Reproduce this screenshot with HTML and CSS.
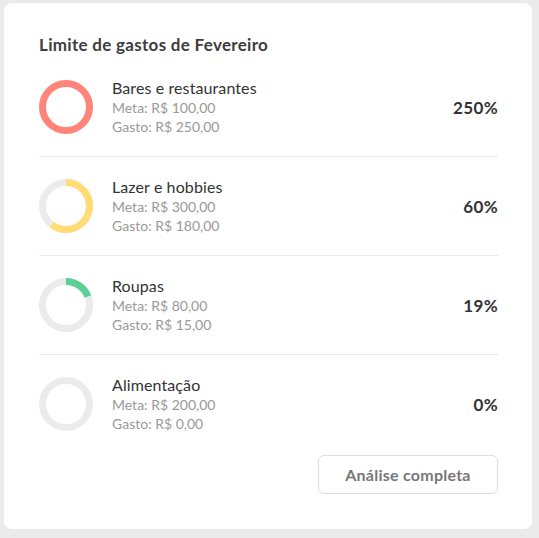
FILE: index.html
```html
<!DOCTYPE html>
<html lang="pt-BR">
<head>
<meta charset="utf-8">
<link rel="stylesheet" href="styles.css">
</head>
<body>
<div class="card">
  <h2 class="title">Limite de gastos de Fevereiro</h2>
  <ul class="list">
    <li class="row">
      <svg class="ring" width="54" height="54" viewBox="0 0 54 54">
        <circle class="track" cx="27" cy="27" r="23.5"/>
        <circle class="bar red" cx="27" cy="27" r="23.5" style="stroke-dasharray: 147.65 147.65"/>
      </svg>
      <div class="info">
        <div class="name">Bares e restaurantes</div>
        <div class="meta">Meta: R$ 100,00</div>
        <div class="meta">Gasto: R$ 250,00</div>
      </div>
      <div class="pct">250%</div>
    </li>
    <li class="row">
      <svg class="ring" width="54" height="54" viewBox="0 0 54 54">
        <circle class="track" cx="27" cy="27" r="23.5"/>
        <circle class="bar yellow" cx="27" cy="27" r="23.5" style="stroke-dasharray: 88.59 147.65"/>
      </svg>
      <div class="info">
        <div class="name">Lazer e hobbies</div>
        <div class="meta">Meta: R$ 300,00</div>
        <div class="meta">Gasto: R$ 180,00</div>
      </div>
      <div class="pct">60%</div>
    </li>
    <li class="row">
      <svg class="ring" width="54" height="54" viewBox="0 0 54 54">
        <circle class="track" cx="27" cy="27" r="23.5"/>
        <circle class="bar green" cx="27" cy="27" r="23.5" style="stroke-dasharray: 28.05 147.65"/>
      </svg>
      <div class="info">
        <div class="name">Roupas</div>
        <div class="meta">Meta: R$ 80,00</div>
        <div class="meta">Gasto: R$ 15,00</div>
      </div>
      <div class="pct">19%</div>
    </li>
    <li class="row">
      <svg class="ring" width="54" height="54" viewBox="0 0 54 54">
        <circle class="track" cx="27" cy="27" r="23.5"/>
      </svg>
      <div class="info">
        <div class="name">Alimentação</div>
        <div class="meta">Meta: R$ 200,00</div>
        <div class="meta">Gasto: R$ 0,00</div>
      </div>
      <div class="pct">0%</div>
    </li>
  </ul>
  <div class="actions">
    <button class="btn">Análise completa</button>
  </div>
</div>
</body>
</html>
```
FILE: styles.css
```css
* { box-sizing: border-box; }
html, body { margin: 0; padding: 0; }
body {
  background: #ebebeb;
  font-family: "Lato", "Open Sans", sans-serif;
  color: #333;
  padding: 3px 7px 9px 4px;
}
.card {
  background: #fff;
  border-radius: 8px;
  width: 528px;
  height: 526px;
  padding: 30px 34px 34px 35px;
}
.title {
  margin: 0 0 1px 0;
  font-size: 17px;
  line-height: 24px;
  font-weight: 700;
  letter-spacing: 0.3px;
  color: #3d3d3d;
}
.list { list-style: none; margin: 0; padding: 0; }
.row {
  display: flex;
  align-items: center;
  padding: 20px 0;
  border-bottom: 1px solid #e8e8e8;
}
.row:last-child { border-bottom: none; }
.ring { flex: none; display: block; margin-right: 19px; }
.ring circle { fill: none; stroke-width: 7; }
.track { stroke: #ebebeb; }
.bar { transform: rotate(-90deg); transform-origin: 27px 27px; }
.red { stroke: #ff857b; }
.yellow { stroke: #ffdc74; }
.green { stroke: #5ccf96; }
.info { flex: 1; }
.name { font-size: 16px; line-height: 20px; color: #333; letter-spacing: 0.1px; }
.meta { font-size: 14px; line-height: 19px; color: #999; }
.pct { font-size: 17px; font-weight: 700; letter-spacing: 0.4px; color: #333; }
.actions { display: flex; justify-content: flex-end; padding-top: 2px; }
.btn {
  width: 180px;
  height: 39px;
  background: #fff;
  border: 1px solid #dedede;
  border-radius: 6px;
  font-family: inherit;
  font-size: 16px;
  font-weight: 700;
  letter-spacing: 0.25px;
  color: #777;
}
```
